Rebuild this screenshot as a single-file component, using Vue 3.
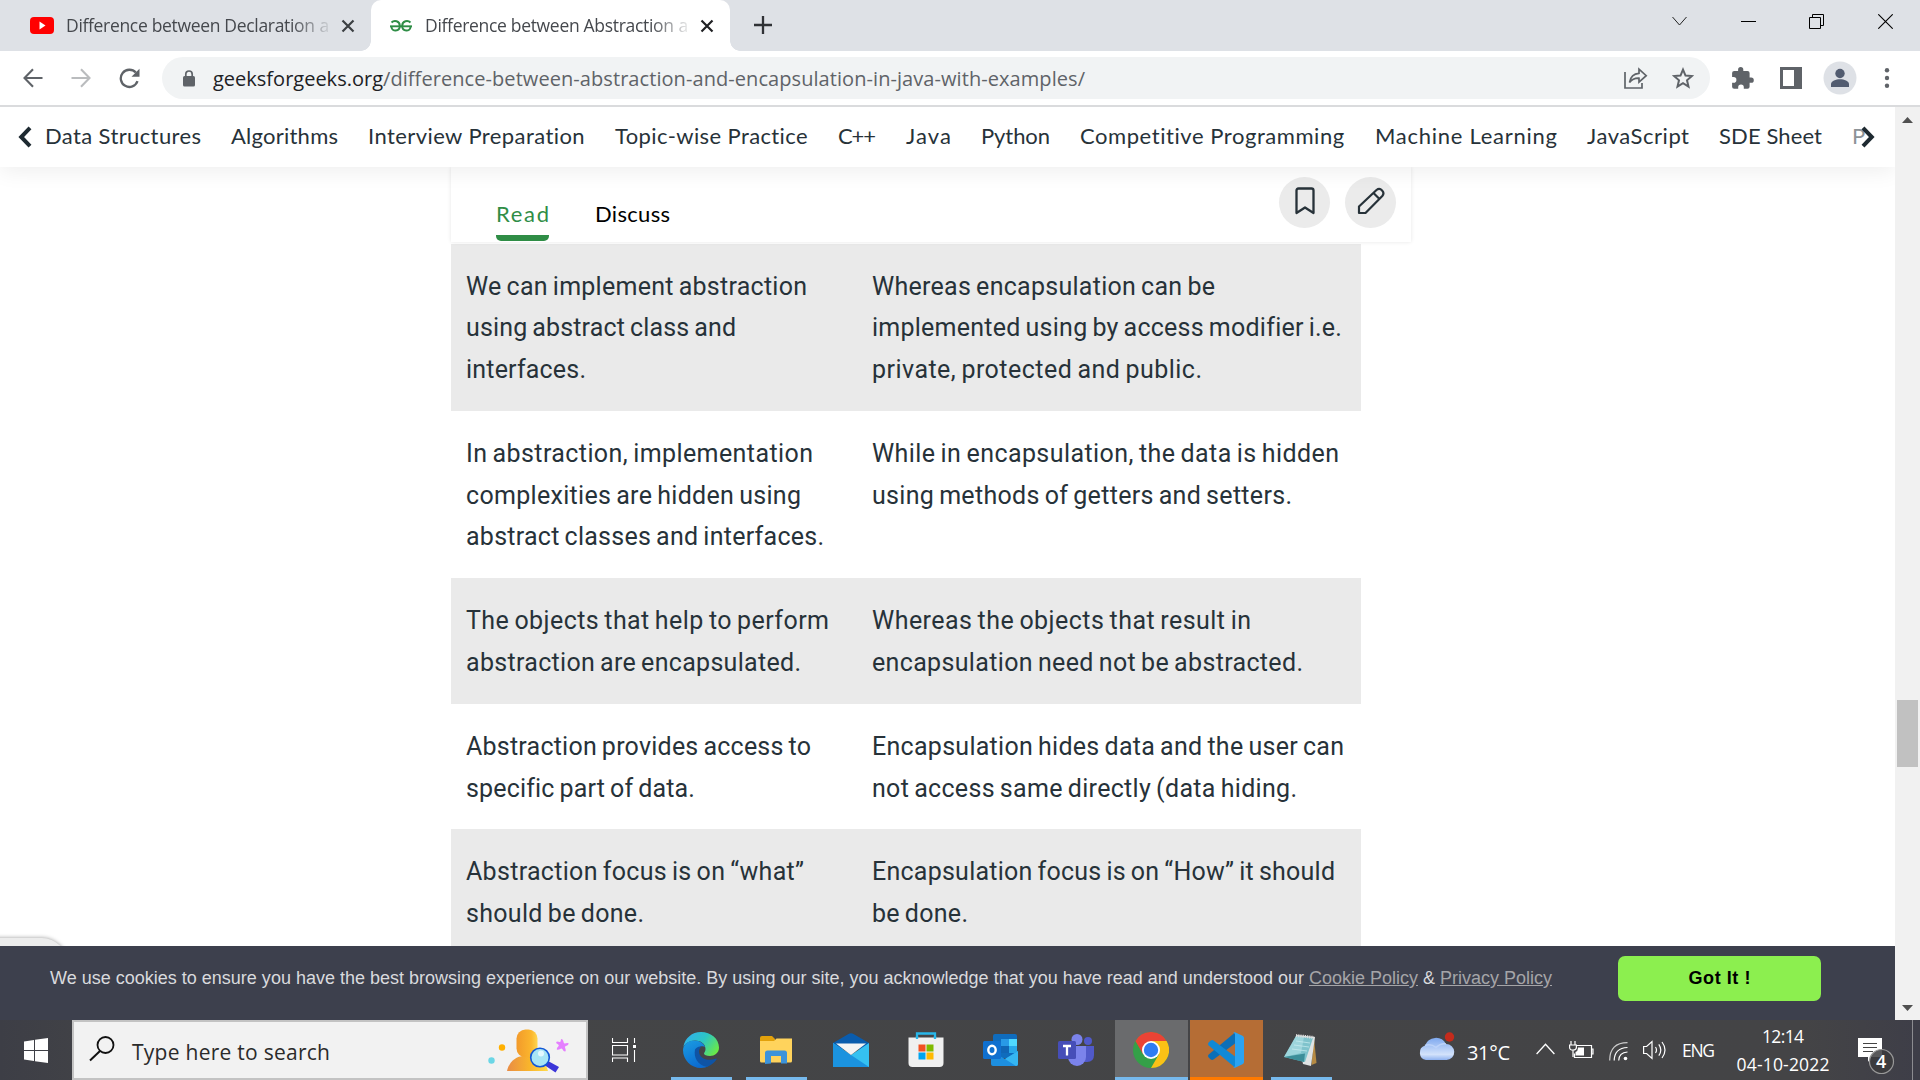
<script setup>
// Spreads the letters of a line so that it fills the given width in pixels.
const vFit = {
  mounted(el, binding) {
    el.style.width = 'auto'
    const natural = el.getBoundingClientRect().width
    const count = el.textContent.trim().length
    el.style.letterSpacing = (binding.value - natural) / Math.max(1, count - 1) + 'px'
    el.style.width = binding.value + 'px'
  }
}

const navItems = [
  ['Data Structures', 156],
  ['Algorithms', 107],
  ['Interview Preparation', 217],
  ['Topic-wise Practice', 193],
  ['C++', 38],
  ['Java', 45],
  ['Python', 69],
  ['Competitive Programming', 265],
  ['Machine Learning', 182],
  ['JavaScript', 102],
  ['SDE Sheet', 103]
]

const rows = [
  {
    left: [['We can implement abstraction', 341], ['using abstract class and', 270], ['interfaces.', 120]],
    right: [['Whereas encapsulation can be', 343], ['implemented using by access modifier i.e.', 469], ['private, protected and public.', 330]]
  },
  {
    left: [['In abstraction, implementation', 347], ['complexities are hidden using', 335], ['abstract classes and interfaces.', 358]],
    right: [['While in encapsulation, the data is hidden', 467], ['using methods of getters and setters.', 420]]
  },
  {
    left: [['The objects that help to perform', 363], ['abstraction are encapsulated.', 335]],
    right: [['Whereas the objects that result in', 379], ['encapsulation need not be abstracted.', 431]]
  },
  {
    left: [['Abstraction provides access to', 345], ['specific part of data.', 228]],
    right: [['Encapsulation hides data and the user can', 472], ['not access same directly (data hiding.', 425]]
  },
  {
    left: [['Abstraction focus is on “what”', 338], ['should be done.', 178]],
    right: [['Encapsulation focus is on “How” it should', 463], ['be done.', 96]]
  }
]
</script>

<template>
  <div class="screen">
    <header class="tabs">
      <div class="tab first">
        <svg class="yt" width="24" height="17" viewBox="0 0 24 17"><rect width="24" height="17" rx="4" fill="#f00" /><path d="M9.500 4.600v7.800l6-3.900z" fill="#fff" /></svg>
        <div class="tab-title"><span v-fit="249" class="t">Difference between Declaration</span><span class="t">&nbsp;a</span></div>
        <svg class="x" width="14" height="14" viewBox="0 0 14 14"><path d="M1.500 1.500l11 11M12.500 1.500l-11 11" stroke="#3c4043" stroke-width="2.200" /></svg>
      </div>
      <div class="tab active">
        <svg class="gfg" width="22" height="12" viewBox="0 0 22 12"><g fill="none" stroke="#2f8d46" stroke-width="2"><path d="M1.500 2.500C4 .2 9.800.5 9.800 6c0 6-8 5.800-8.300 1M20.500 2.500C18 .2 12.200.5 12.200 6c0 6 8 5.800 8.300 1" /><path d="M0 6.300h22" stroke-width="1.900" /></g></svg>
        <div class="tab-title"><span v-fit="249" class="t">Difference between Abstraction</span><span class="t">&nbsp;a</span></div>
        <svg class="x" width="14" height="14" viewBox="0 0 14 14"><path d="M1.500 1.500l11 11M12.500 1.500l-11 11" stroke="#202124" stroke-width="2.200" /></svg>
      </div>
      <svg class="plus" width="18" height="18" viewBox="0 0 18 18"><path d="M9 0v18M0 9h18" stroke="#303236" stroke-width="2.300" /></svg>
      <div class="win">
        <svg width="15" height="15" viewBox="0 0 15 15"><path d="M.5 3l7 8 7-8" fill="none" stroke="#222" /></svg>
        <svg width="15" height="15" viewBox="0 0 15 15"><path d="M0 7.500h15" stroke="#000" /></svg>
        <svg width="15" height="15" viewBox="0 0 15 15"><path d="M.5 3.500h11v11H.5zM3.500 3.500v-3h11v11h-3" fill="none" stroke="#000" /></svg>
        <svg width="15" height="15" viewBox="0 0 15 15"><path d="M.3.3l14.400 14.400M14.700.3L.3 14.700" stroke="#000" stroke-width="1.100" /></svg>
      </div>
    </header>

    <div class="toolbar">
      <svg class="back" width="20" height="20" viewBox="0 0 20 20"><path d="M19.500 10H2M10 1.200L1.500 10l8.500 8.800" fill="none" stroke="#5f6368" stroke-width="2.100" /></svg>
      <svg class="fwd" width="20" height="20" viewBox="0 0 20 20"><path d="M.5 10H18M10 1.200l8.500 8.800-8.500 8.800" fill="none" stroke="#babcbe" stroke-width="2.100" /></svg>
      <svg class="reload" width="21" height="21" viewBox="0 0 21 21"><path d="M18.500 13.200A8.600 8.600 0 1 1 16.800 4.600" fill="none" stroke="#5f6368" stroke-width="2.300" /><path d="M20.500.8v8h-8z" fill="#5f6368" /></svg>
      <div class="omnibox">
        <svg class="lock" width="12" height="17" viewBox="0 0 12 17"><rect y="6" width="12" height="10.500" rx="1.600" fill="#5f6368" /><path d="M2.800 7V4.200a3.200 3.200 0 0 1 6.400 0V7" fill="none" stroke="#5f6368" stroke-width="1.700" /></svg>
        <span v-fit="170" class="t host">geeksforgeeks.org</span><span v-fit="702" class="t path">/difference-between-abstraction-and-encapsulation-in-java-with-examples/</span>
        <svg class="share" width="24" height="22" viewBox="0 0 24 22"><g fill="none" stroke="#5f6368" stroke-width="1.700"><path d="M1 5v16h17v-5" /><path d="M5.500 15.500C6.500 9.500 10 6.500 15 6.300V2.200l7.200 6.500-7.200 6.500v-4c-4-.2-7 1-9.500 4.300z" /></g></svg>
        <svg class="star" width="22" height="22" viewBox="0 0 22 22"><path d="M11 2.600l2.500 6 6.400.5-4.900 4.200 1.500 6.300-5.500-3.400-5.500 3.400L7 13.300 2.100 9.100l6.400-.5z" fill="none" stroke="#5f6368" stroke-width="2" /></svg>
      </div>
      <svg class="puzzle" width="22" height="22" viewBox="0 0 22 22"><path d="M19.200 10.600h-1.600V6.100a2.100 2.100 0 0 0-2.100-2.100h-4.200V2.600a2.600 2.600 0 0 0-5.200 0V4H2.200A2.100 2.100 0 0 0 .100 6.100v4h1.500a2.800 2.800 0 0 1 0 5.600H.100v4a2.100 2.100 0 0 0 2.100 2.100h4v-1.500a2.800 2.800 0 0 1 5.600 0v1.500h3.700a2.100 2.100 0 0 0 2.100-2.100v-3.900h1.600a2.600 2.600 0 0 0 0-5.200z" fill="#5f6368" /></svg>
      <svg class="panel" width="22" height="22" viewBox="0 0 22 22"><path d="M0 0h22v22H0zM3 3v16h11V3z" fill="#5f6368" fill-rule="evenodd" /></svg>
      <svg class="avatar" width="34" height="34" viewBox="0 0 34 34"><circle cx="17" cy="17" r="16.500" fill="#dee1e6" /><circle cx="17" cy="12.500" r="4.700" fill="#525c70" /><path d="M8 26v-3c0-3 5-4.800 9-4.800s9 1.800 9 4.800v3z" fill="#525c70" /></svg>
      <svg class="dots" width="6" height="20" viewBox="0 0 6 20"><g fill="#5f6368"><circle cx="3" cy="2.300" r="2.200" /><circle cx="3" cy="10" r="2.200" /><circle cx="3" cy="17.700" r="2.200" /></g></svg>
    </div>

    <div class="viewport">
      <div class="page">
        <nav class="nav">
          <svg class="prev" width="14" height="22" viewBox="0 0 14 22"><path d="M12 1.800L3.200 11l8.800 9.200" fill="none" stroke="#1e2a31" stroke-width="4" /></svg>
          <span v-for="item in navItems" :key="item[0]" v-fit="item[1]" class="t">{{ item[0] }}</span>
          <span class="t faded">P</span>
          <svg class="next" width="14" height="22" viewBox="0 0 14 22"><path d="M2 1.800L10.800 11 2 20.200" fill="none" stroke="#1e2a31" stroke-width="4" /></svg>
        </nav>
        <main class="content">
          <div class="article-bar">
            <div class="switch on"><span v-fit="53" class="t">Read</span></div>
            <div class="switch"><span v-fit="75" class="t">Discuss</span></div>
            <div class="round first-round">
              <svg width="20" height="28" viewBox="0 0 20 28"><path d="M1.500 26V3.500q0-2 2-2h13q2 0 2 2V26L10 20.500z" fill="none" stroke="#273239" stroke-width="2.300" stroke-linejoin="round" /></svg>
            </div>
            <div class="round">
              <svg width="28" height="28" viewBox="0 0 28 28"><path d="M2 26v-6.500L19.500 3a4.200 4.200 0 0 1 5.800 6L8.500 26zM16.500 6l6 6" fill="none" stroke="#273239" stroke-width="2.200" stroke-linejoin="round" /></svg>
            </div>
          </div>
          <div class="table">
            <div v-for="(row, i) in rows" :key="i" class="row" :class="{ shaded: i % 2 === 0 }">
              <div class="cell left"><div v-for="line in row.left" :key="line[0]" class="line"><span v-fit="line[1]" class="t">{{ line[0] }}</span></div></div>
              <div class="cell"><div v-for="line in row.right" :key="line[0]" class="line"><span v-fit="line[1]" class="t">{{ line[0] }}</span></div></div>
            </div>
          </div>
        </main>
        <div class="pill"></div>
        <div class="cookies">
          <span v-fit="1254" class="t">We use cookies to ensure you have the best browsing experience on our website. By using our site, you acknowledge that you have read and understood our</span>
          <span v-fit="109" class="t link l1">Cookie Policy</span>
          <span class="t amp">&amp;</span>
          <span v-fit="112" class="t link">Privacy Policy</span>
          <button class="got"><span v-fit="62" class="t">Got It !</span></button>
        </div>
      </div>
      <div class="scroll">
        <svg width="11" height="6" viewBox="0 0 11 6"><path d="M0 6L5.500 0 11 6z" fill="#505050" /></svg>
        <div class="thumb"></div>
        <svg class="down" width="11" height="6" viewBox="0 0 11 6"><path d="M0 0l5.500 6L11 0z" fill="#505050" /></svg>
      </div>
    </div>

    <footer class="taskbar">
      <div class="start">
        <svg width="24" height="25" viewBox="0 0 24 25"><path d="M0 3.500l10-1.500v10H0zM11 1.800L24 0v12H11zM0 13h10v10L0 21.500zM11 13h13v12l-13-1.800z" fill="#fff" /></svg>
      </div>
      <div class="search">
        <svg class="glass" width="26" height="26" viewBox="0 0 26 26"><circle cx="16.500" cy="9" r="8" fill="none" stroke="#111" stroke-width="1.800" /><path d="M11 15L1 24.500" stroke="#111" stroke-width="2" /></svg>
        <span v-fit="198" class="t hint">Type here to search</span>
        <svg class="art" width="84" height="46" viewBox="0 0 84 46">
          <defs>
            <linearGradient id="body" x1="0" x2="1"><stop offset="0" stop-color="#e98c45" /><stop offset=".55" stop-color="#f9b52b" /><stop offset="1" stop-color="#ffdb4d" /></linearGradient>
            <linearGradient id="head" x1="0" x2="1" y2="0"><stop offset="0" stop-color="#f29a2b" /><stop offset=".7" stop-color="#fbb62d" /><stop offset="1" stop-color="#ffd650" /></linearGradient>
          </defs>
          <path d="M20 43c2-9 9-15 17-15h6c9 0 16 7 18 15z" fill="url(#body)" />
          <rect x="29.500" y="1.500" width="21" height="28" rx="9" fill="url(#head)" />
          <circle cx="4.500" cy="32.500" r="3.200" fill="#6bd6e6" />
          <circle cx="15" cy="19.500" r="3.200" fill="#ffb000" />
          <path d="M61 33l11 6-3.500 5.500-10.500-7z" fill="#3b35d8" />
          <circle cx="53" cy="29.500" r="9.300" fill="#a8e5f5" stroke="#1258d6" stroke-width="1.600" />
          <circle cx="54" cy="25.500" r="3" fill="#e3f9ff" />
          <path d="M74.500 11q1.500 0 2.300 3.800.4 1.200 2 .4 3.300-.6 2.800.8-.4 1.200-3.200 2.200-1 .6-.2 1.800 1.200 3.200-.2 3.600-1.200.2-2.700-2.700-.7-.8-1.500-.2-3.200 1.800-4 .7-.5-1.200 1.800-3.300.5-.9-.4-1.500-2.700-1.600-2-2.600.8-1 3.400-.1 1 .1 1.100-.9.200-2 .8-2z" fill="#e580ff" />
        </svg>
      </div>
      <div class="slot view">
        <svg width="24" height="24" viewBox="0 0 24 24"><path d="M.5 0v4.500h15V0M.5 24v-4h15v4M.5 7.500h15v9.500H.5zM22.500 0v5M22.500 12v12" fill="none" stroke="#fff" stroke-width="1.100" /><rect x="21" y="7" width="3" height="3" fill="#fff" /></svg>
      </div>
      <div class="slot running">
        <svg width="36" height="36" viewBox="0 0 36 36">
          <defs>
            <linearGradient id="e1" x1="0" y1=".2" x2="1" y2=".7"><stop offset="0" stop-color="#31b0ee" /><stop offset=".5" stop-color="#2cc5c5" /><stop offset="1" stop-color="#6bea45" /></linearGradient>
            <linearGradient id="e2" x1="0" y1="0" x2=".5" y2="1"><stop offset="0" stop-color="#1b9de2" /><stop offset="1" stop-color="#0b6bd0" /></linearGradient>
          </defs>
          <path d="M.3 15C2 6 9 0 18 0c10 0 18 7 18 15.500 0 5.500-4.500 8.500-9 8.500-3.500 0-6-1-6-2.500 0-1 1.500-1.500 1.500-4.500C22.500 12 18 8.500 12 8.500 6.500 8.500 2 11.500.3 15z" fill="url(#e1)" />
          <path d="M0 18C.3 12.500 5 8.500 11.500 8.500c5.500 0 9.500 3 10.500 6.500-2-1.500-8-1-8 6C14 29 20 33.500 26 33.500 23.500 35.200 21 36 18 36 8 36 0 28 0 18z" fill="url(#e2)" />
          <path d="M12 17.500c-1.500 8 2.500 15.500 12 17.500 4-1.500 7.500-4.500 9.500-7.500.4-.8-.2-1.200-1-.8C24 30 16 25.500 16 19.500c0-2 1-4 2.500-5-3-.5-5.500 1-6.500 3z" fill="#0f54a5" />
        </svg>
      </div>
      <div class="slot running">
        <svg width="32" height="28" viewBox="0 0 32 28"><path d="M0 2q0-2 2-2h10l3 3v5H0z" fill="#e2a10b" /><path d="M0 5h14l2.500-2.500H32V25q0 1.500-1.500 1.500h-29Q0 26.500 0 25z" fill="#ffd35c" /><path d="M5 28V17q0-2.500 2.500-2.500h17Q27 14.500 27 17v10.500h-6V20H11v7.500z" fill="#3d93da" /></svg>
      </div>
      <div class="slot">
        <svg width="36" height="34" viewBox="0 0 36 34"><path d="M0 10L15.500 1q2.500-1.400 5 0L36 10v6H0z" fill="#0a5cad" /><path d="M0 10l18 12L36 10v24H0z" fill="#35c1f1" /><path d="M0 10l36 24H0z" fill="#1b93df" /><path d="M3 10.500L18 22l15-11.500z" fill="#f4f4f4" /></svg>
      </div>
      <div class="slot">
        <svg width="36" height="36" viewBox="0 0 36 36"><path d="M9 8V1.500h18V8" fill="none" stroke="#28b7ea" stroke-width="2.300" /><path d="M.5 5.500h35V31q0 4-4 4h-27q-4 0-4-4z" fill="#f0f0f0" /><path d="M9 4v3M27 4v3" stroke="#28b7ea" stroke-width="2.300" /><path d="M10.500 12.500h7v7h-7z" fill="#f25022" /><path d="M18.500 12.500h7v7h-7z" fill="#7fba00" /><path d="M10.500 20.500h7v7h-7z" fill="#00a4ef" /><path d="M18.500 20.500h7v7h-7z" fill="#ffb900" /></svg>
      </div>
      <div class="slot">
        <svg width="36" height="33" viewBox="0 0 36 33"><path d="M10 2q0-2 2-2h20q2 0 2 2v22H10z" fill="#0f6cbd" /><path d="M18 5h8v7h-8z" fill="#2899e6" /><path d="M26 5h8v7h-8z" fill="#50d9ff" /><path d="M18 12h8v7h-8z" fill="#1065b5" /><path d="M26 12h8v7h-8z" fill="#28a8ea" /><path d="M8 17l14 8 13-8v13q0 2-2 2H10q-2 0-2-2z" fill="#1d8fe0" /><path d="M22 25l13-8v13q0 2-2 2z" fill="#35b6f2" /><rect y="7" width="18" height="18" rx="1.500" fill="#1070cf" /><ellipse cx="9" cy="16" rx="3.700" ry="4.200" fill="none" stroke="#fff" stroke-width="2.400" /></svg>
      </div>
      <div class="slot">
        <svg width="36" height="33" viewBox="0 0 36 33"><circle cx="30" cy="7" r="4" fill="#5059c9" /><circle cx="19" cy="5.500" r="5.500" fill="#7b83eb" /><path d="M25 12h11v9q0 7-7 7h-4z" fill="#5059c9" /><path d="M10 12h18v11a9 9 0 0 1-18 0z" fill="#7b83eb" /><rect y="7" width="18" height="18" rx="1.500" fill="#464eb8" /><path d="M5 12h8M9 12v9.500" stroke="#fff" stroke-width="2.300" /></svg>
      </div>
      <div class="slot chrome">
        <svg width="36" height="36" viewBox="0 0 36 36"><circle cx="18" cy="18" r="18" fill="#34a048" /><path d="M18 9h15.600A18 18 0 0 1 18 36l7.800-13.500z" fill="#fbc116" /><path d="M2.400 9l7.800 13.500L18 9h15.600A18 18 0 0 0 2.400 9z" fill="#ea4335" /><circle cx="18" cy="18" r="9" fill="#fff" /><circle cx="18" cy="18" r="7.200" fill="#2f7cf2" /></svg>
      </div>
      <div class="slot code">
        <svg width="36" height="36" viewBox="0 0 36 36"><path d="M27 .5v11L5.500 27.500q-1.500 1-3-.3l-1.800-1.700q-1.300-1.500 0-3z" fill="#0b6fb8" /><path d="M27 35.500v-11L5.500 8.500q-1.500-1-3 .3L.7 10.500q-1.300 1.500 0 3z" fill="#1089d6" /><path d="M27 .3l7.500 3.500Q36 4.600 36 6v24q0 1.500-1.500 2.200L27 35.700q-1 .3-2-.7 2 .5 2-1.500v-31Q27 .5 25 1q1-1 2-.7z" fill="#2ba3f1" /></svg>
      </div>
      <div class="slot running">
        <svg width="34" height="34" viewBox="0 0 34 34"><path d="M30 5l2.500 25-5 2z" fill="#b58a43" /><path d="M13 2l18 2-4 29-8-2z" fill="#dfe3e4" /><path d="M12 3l17 2-8 24L0 24z" fill="#7fc3cc" /><path d="M12 3l8 1-3 16L0 24z" fill="#a9dde2" opacity=".7" /><path d="M0 24l21-3.500-1 8.500z" fill="#3c8e99" /><path d="M12 2.500l18 2" stroke="#ddd" stroke-width="3" stroke-dasharray="1.200 1" /><path d="M12 8l14 2M10 12l15 2M8 16l15 2" stroke="#cbeef0" stroke-width=".7" /></svg>
      </div>
      <div class="tray">
        <svg class="cloud" width="38" height="30" viewBox="0 0 38 30">
          <defs><linearGradient id="cl" x1="0" y1="0" x2="0" y2="1"><stop offset="0" stop-color="#7fa9ef" /><stop offset=".75" stop-color="#d3e2fb" /><stop offset="1" stop-color="#8fb2f0" /></linearGradient></defs>
          <path d="M8 28a7.500 7.500 0 0 1-1-14.500A11.500 11.500 0 0 1 28 12a8 8 0 0 1 .5 16z" fill="url(#cl)" />
          <path d="M7 13.500q6-2 11 2 5-4.500 10-3.500" fill="none" stroke="#bdd3f9" stroke-width="1.500" />
          <circle cx="31.500" cy="5" r="4.700" fill="#c42b1c" />
        </svg>
        <span v-fit="43" class="t temp">31°C</span>
        <svg class="caret" width="19" height="12" viewBox="0 0 19 12"><path d="M.6 11L9.500 1.200l8.900 9.800" fill="none" stroke="#fff" stroke-width="1.300" /></svg>
        <svg class="battery" width="25" height="18" viewBox="0 0 25 18"><path d="M8 4.500h14.500v12H5.500v-4M22.500 8H24v5h-1.500M2 0v4M6 0v4M.6 4h6.800v2.500Q7.400 9 4 9 .6 9 .6 6.500zM4 9v7" fill="none" stroke="#fff" stroke-width="1.200" /><path d="M9 6.500h6v8H6.500V11Q9 10 9 7z" fill="#fff" /></svg>
        <svg class="wifi" width="19" height="19" viewBox="0 0 19 19"><g fill="none" stroke="#ccc" stroke-width="1.200"><path d="M.7 18.500Q.7.700 18.500.700" /><path d="M5.200 18.500Q5.500 6 18.500 5.500" stroke="#fff" /><path d="M9.700 18.500Q10 10.500 18.500 10" stroke="#fff" /></g><circle cx="16.500" cy="16.500" r="1.800" fill="#fff" /></svg>
        <svg class="sound" width="24" height="20" viewBox="0 0 24 20"><g fill="none" stroke="#fff" stroke-width="1.200"><path d="M.6 6.500h3L9 1.500v17l-5.400-5h-3z" /><path d="M12.500 7q2 3 0 6M15.800 4.300q4 5.700 0 11.400M19 2q6 8 0 16" /></g></svg>
        <span v-fit="33" class="t lang">ENG</span>
        <div class="clock"><span v-fit="42" class="t">12:14</span><span v-fit="93" class="t">04-10-2022</span></div>
        <div class="notes">
          <svg width="38" height="38" viewBox="0 0 38 38"><path d="M0 0h24v19H13l-3 5v-5H0z" fill="#fff" /><path d="M5 5.500h14M5 9.500h14M5 13.500h10" stroke="#444" stroke-width="1.100" /><circle cx="23.500" cy="23.500" r="12" fill="#3b3b3d" fill-opacity=".85" stroke="#999" stroke-width="1.200" /></svg>
          <span class="badge">4</span>
        </div>
        <div class="edge-line"></div>
      </div>
    </footer>
  </div>
</template>

<style>
body {
  margin: 0;
  overflow: hidden;
}
</style>

<style scoped>
.screen {
  width: 1920px;
  height: 1080px;
  display: flex;
  flex-direction: column;
  background: #fff;
  font-family: "Open Sans", "Noto Sans", sans-serif;
  overflow: hidden;
}
svg {
  display: block;
  flex: none;
}
.t {
  display: inline-block;
  flex: none;
  white-space: nowrap;
}
.tabs {
  height: 51px;
  flex: none;
  display: flex;
  background: #dee1e6;
}
.tab {
  display: flex;
  align-items: center;
  box-sizing: border-box;
  height: 51px;
}
.first {
  width: 371px;
  padding-left: 30px;
  position: relative;
  z-index: 1;
}
.active {
  width: 359px;
  padding-left: 19px;
  background: #fff;
  border-radius: 10px 10px 0 0;
  position: relative;
}
.active::before,
.active::after {
  content: "";
  position: absolute;
  bottom: 0;
  width: 10px;
  height: 10px;
}
.active::before {
  left: -10px;
  background: radial-gradient(circle at 0 0, transparent 9.500px, #fff 10px);
}
.active::after {
  right: -10px;
  background: radial-gradient(circle at 100% 0, transparent 9.500px, #fff 10px);
}
.tab-title {
  width: 264px;
  margin: -1px 0 0 12px;
  font-size: 17.500px;
  line-height: 26px;
  color: #45484d;
  overflow: hidden;
  display: flex;
  -webkit-mask-image: linear-gradient(90deg, #000 225px, transparent 268px);
  mask-image: linear-gradient(90deg, #000 225px, transparent 268px);
}
.active .tab-title {
  margin-left: 13px;
}
.x {
  margin-left: 11px;
}
.plus {
  margin: 16px 0 0 24px;
}
.win {
  display: flex;
  gap: 53.700px;
  margin: 14px 27px 0 auto;
}
.toolbar {
  height: 54px;
  flex: none;
  display: flex;
  align-items: center;
  border-bottom: 2px solid #dadbdd;
}
.back {
  margin-left: 23px;
}
.fwd {
  margin-left: 28px;
}
.reload {
  margin-left: 28px;
}
.omnibox {
  margin-left: 22px;
  width: 1548px;
  height: 42px;
  border-radius: 21px;
  background: #f1f3f4;
  display: flex;
  align-items: center;
  font-size: 20px;
  line-height: 30px;
  color: #5f6368;
}
.lock {
  margin: 0 18px 0 21px;
}
.host,
.path {
  margin-top: 1px;
}
.host {
  color: #202124;
}
.share {
  margin-left: auto;
}
.star {
  margin: 0 16px 0 24px;
}
.puzzle {
  margin-left: 22px;
}
.panel {
  margin-left: 26px;
}
.avatar {
  margin-left: 21px;
}
.dots {
  margin-left: 27px;
}
.viewport {
  height: 913px;
  flex: none;
  display: flex;
}
.page {
  width: 1895px;
  position: relative;
  display: flex;
  flex-direction: column;
  overflow: hidden;
}
.nav {
  height: 60px;
  box-sizing: border-box;
  flex: none;
  display: flex;
  align-items: center;
  gap: 30px;
  font-family: Lato, sans-serif;
  font-size: 22px;
  line-height: 30px;
  color: #273239;
  background: #fff;
  box-shadow: 0 4px 22px rgba(0, 0, 0, 0.07);
  position: relative;
  z-index: 1;
}
.nav .t {
  margin-top: -2px;
}
.prev {
  margin: 0 -17px 0 18px;
}
.faded {
  color: #8d9397;
}
.next {
  margin-left: -34px;
}
.content {
  height: 779px;
  flex: none;
  padding-left: 451px;
  overflow: hidden;
}
.article-bar {
  width: 960px;
  height: 75px;
  display: flex;
  box-shadow: 0 0 4px rgba(0, 0, 0, 0.1);
  position: relative;
  font-family: Lato, sans-serif;
  font-size: 22px;
  line-height: 30px;
}
.switch {
  box-sizing: border-box;
  height: 74px;
  padding-top: 32px;
  margin-left: 46px;
}
.on {
  margin-left: 45px;
  color: #2f8d46;
  border-bottom: 6px solid #2f8d46;
  border-radius: 0 0 5px 5px;
}
.round {
  width: 51px;
  height: 51px;
  border-radius: 50%;
  background: #ebebeb;
  display: flex;
  align-items: center;
  justify-content: center;
  margin: 10px 0 0 15px;
  box-sizing: border-box;
  padding-bottom: 3px;
}
.first-round {
  margin-left: 609px;
}
.table {
  width: 910px;
  font-family: Roboto, sans-serif;
  font-size: 25px;
  word-spacing: -1.500px;
  line-height: 41.800px;
  color: #273239;
  padding-top: 1.500px;
}
.row {
  display: flex;
  padding: 22px 0 20px;
}
.shaded {
  background: #eaeaea;
}
.left {
  width: 406px;
  padding-left: 15px;
}
.line {
  height: 41.800px;
}
.pill {
  position: absolute;
  left: -30px;
  top: 831px;
  width: 97px;
  height: 50px;
  border-radius: 28px;
  background: #ececec;
  box-shadow: 0 0 4px rgba(0, 0, 0, 0.4);
}
.cookies {
  height: 74px;
  flex: none;
  display: flex;
  position: relative;
  background: #3d404d;
  box-sizing: border-box;
  padding: 17px 0 0 50px;
  font-family: "Liberation Sans", Arial, sans-serif;
  font-size: 18px;
  line-height: 30px;
  color: #d9dadd;
}
.link {
  color: #a5a5a8;
  text-decoration: underline;
}
.l1 {
  margin-left: 5px;
}
.amp {
  width: 12px;
  margin: 0 5px;
}
.got {
  width: 203px;
  height: 45px;
  margin: -7px 0 0 66px;
  padding: 0;
  border: 0;
  border-radius: 7px;
  background: #8cef4f;
  color: #000;
  font: bold 18px/45px "Liberation Sans", Arial, sans-serif;
}
.scroll {
  width: 25px;
  background: #f1f1f1;
  display: flex;
  flex-direction: column;
  align-items: center;
  padding-top: 10px;
  box-sizing: border-box;
}
.thumb {
  width: 21px;
  height: 67px;
  margin-top: 577px;
  background: #c1c1c1;
}
.down {
  margin-top: 238px;
}
.taskbar {
  height: 60px;
  flex: none;
  display: flex;
  background: linear-gradient(90deg, #3d3e46, #444547 8%, #444446 94%, #3e3e48);
  color: #fff;
}
.start {
  width: 72px;
  display: flex;
  justify-content: center;
  align-items: center;
}
.search {
  width: 516px;
  box-sizing: border-box;
  border: 2px solid #c3c3c3;
  background: #f2f2f2;
  display: flex;
  align-items: center;
  font-size: 21px;
  color: #2b2b2b;
}
.glass {
  margin: -2px 17px 0 15px;
}
.hint {
  margin-top: 4px;
}
.art {
  margin-left: 157px;
  margin-top: 1px;
}
.slot {
  width: 75px;
  box-sizing: border-box;
  display: flex;
  align-items: center;
  justify-content: center;
  position: relative;
  padding-right: 1.500px;
}
.view {
  width: 76px;
  padding-right: 4px;
}
.running::after {
  content: "";
  position: absolute;
  left: 7px;
  bottom: 0;
  width: 61px;
  height: 3px;
  background: #76b9ed;
}
.chrome {
  width: 73px;
  margin: 0 1px;
  background: #6a6b6d;
  border-bottom: 3px solid #76b9ed;
  padding-top: 3px;
}
.code {
  width: 73px;
  margin: 0 1px;
  background: #b56d35;
  border-bottom: 3px solid #ff7a00;
  padding-top: 3px;
}
.tray {
  flex: 1;
  display: flex;
  align-items: center;
}
.cloud {
  margin: -6px 0 0 79px;
}
.temp {
  margin: 4px 0 0 11px;
  font-size: 20px;
}
.caret {
  margin: -2px 0 0 26px;
}
.battery {
  margin-left: 14px;
}
.wifi {
  margin: 2px 0 0 15px;
}
.sound {
  margin-left: 15px;
}
.lang {
  margin-left: 15px;
  font-size: 17.500px;
}
.clock {
  width: 94px;
  margin-left: 21px;
  display: flex;
  flex-direction: column;
  align-items: center;
  font-size: 17.500px;
  line-height: 28px;
}
.notes {
  position: relative;
  margin: 14px 0 0 28px;
}
.badge {
  position: absolute;
  left: 18px;
  top: 11px;
  font-size: 18px;
  line-height: 25px;
  font-weight: 600;
}
.edge-line {
  width: 1px;
  height: 60px;
  margin-left: 16px;
  background: #8c8c90;
}
</style>
